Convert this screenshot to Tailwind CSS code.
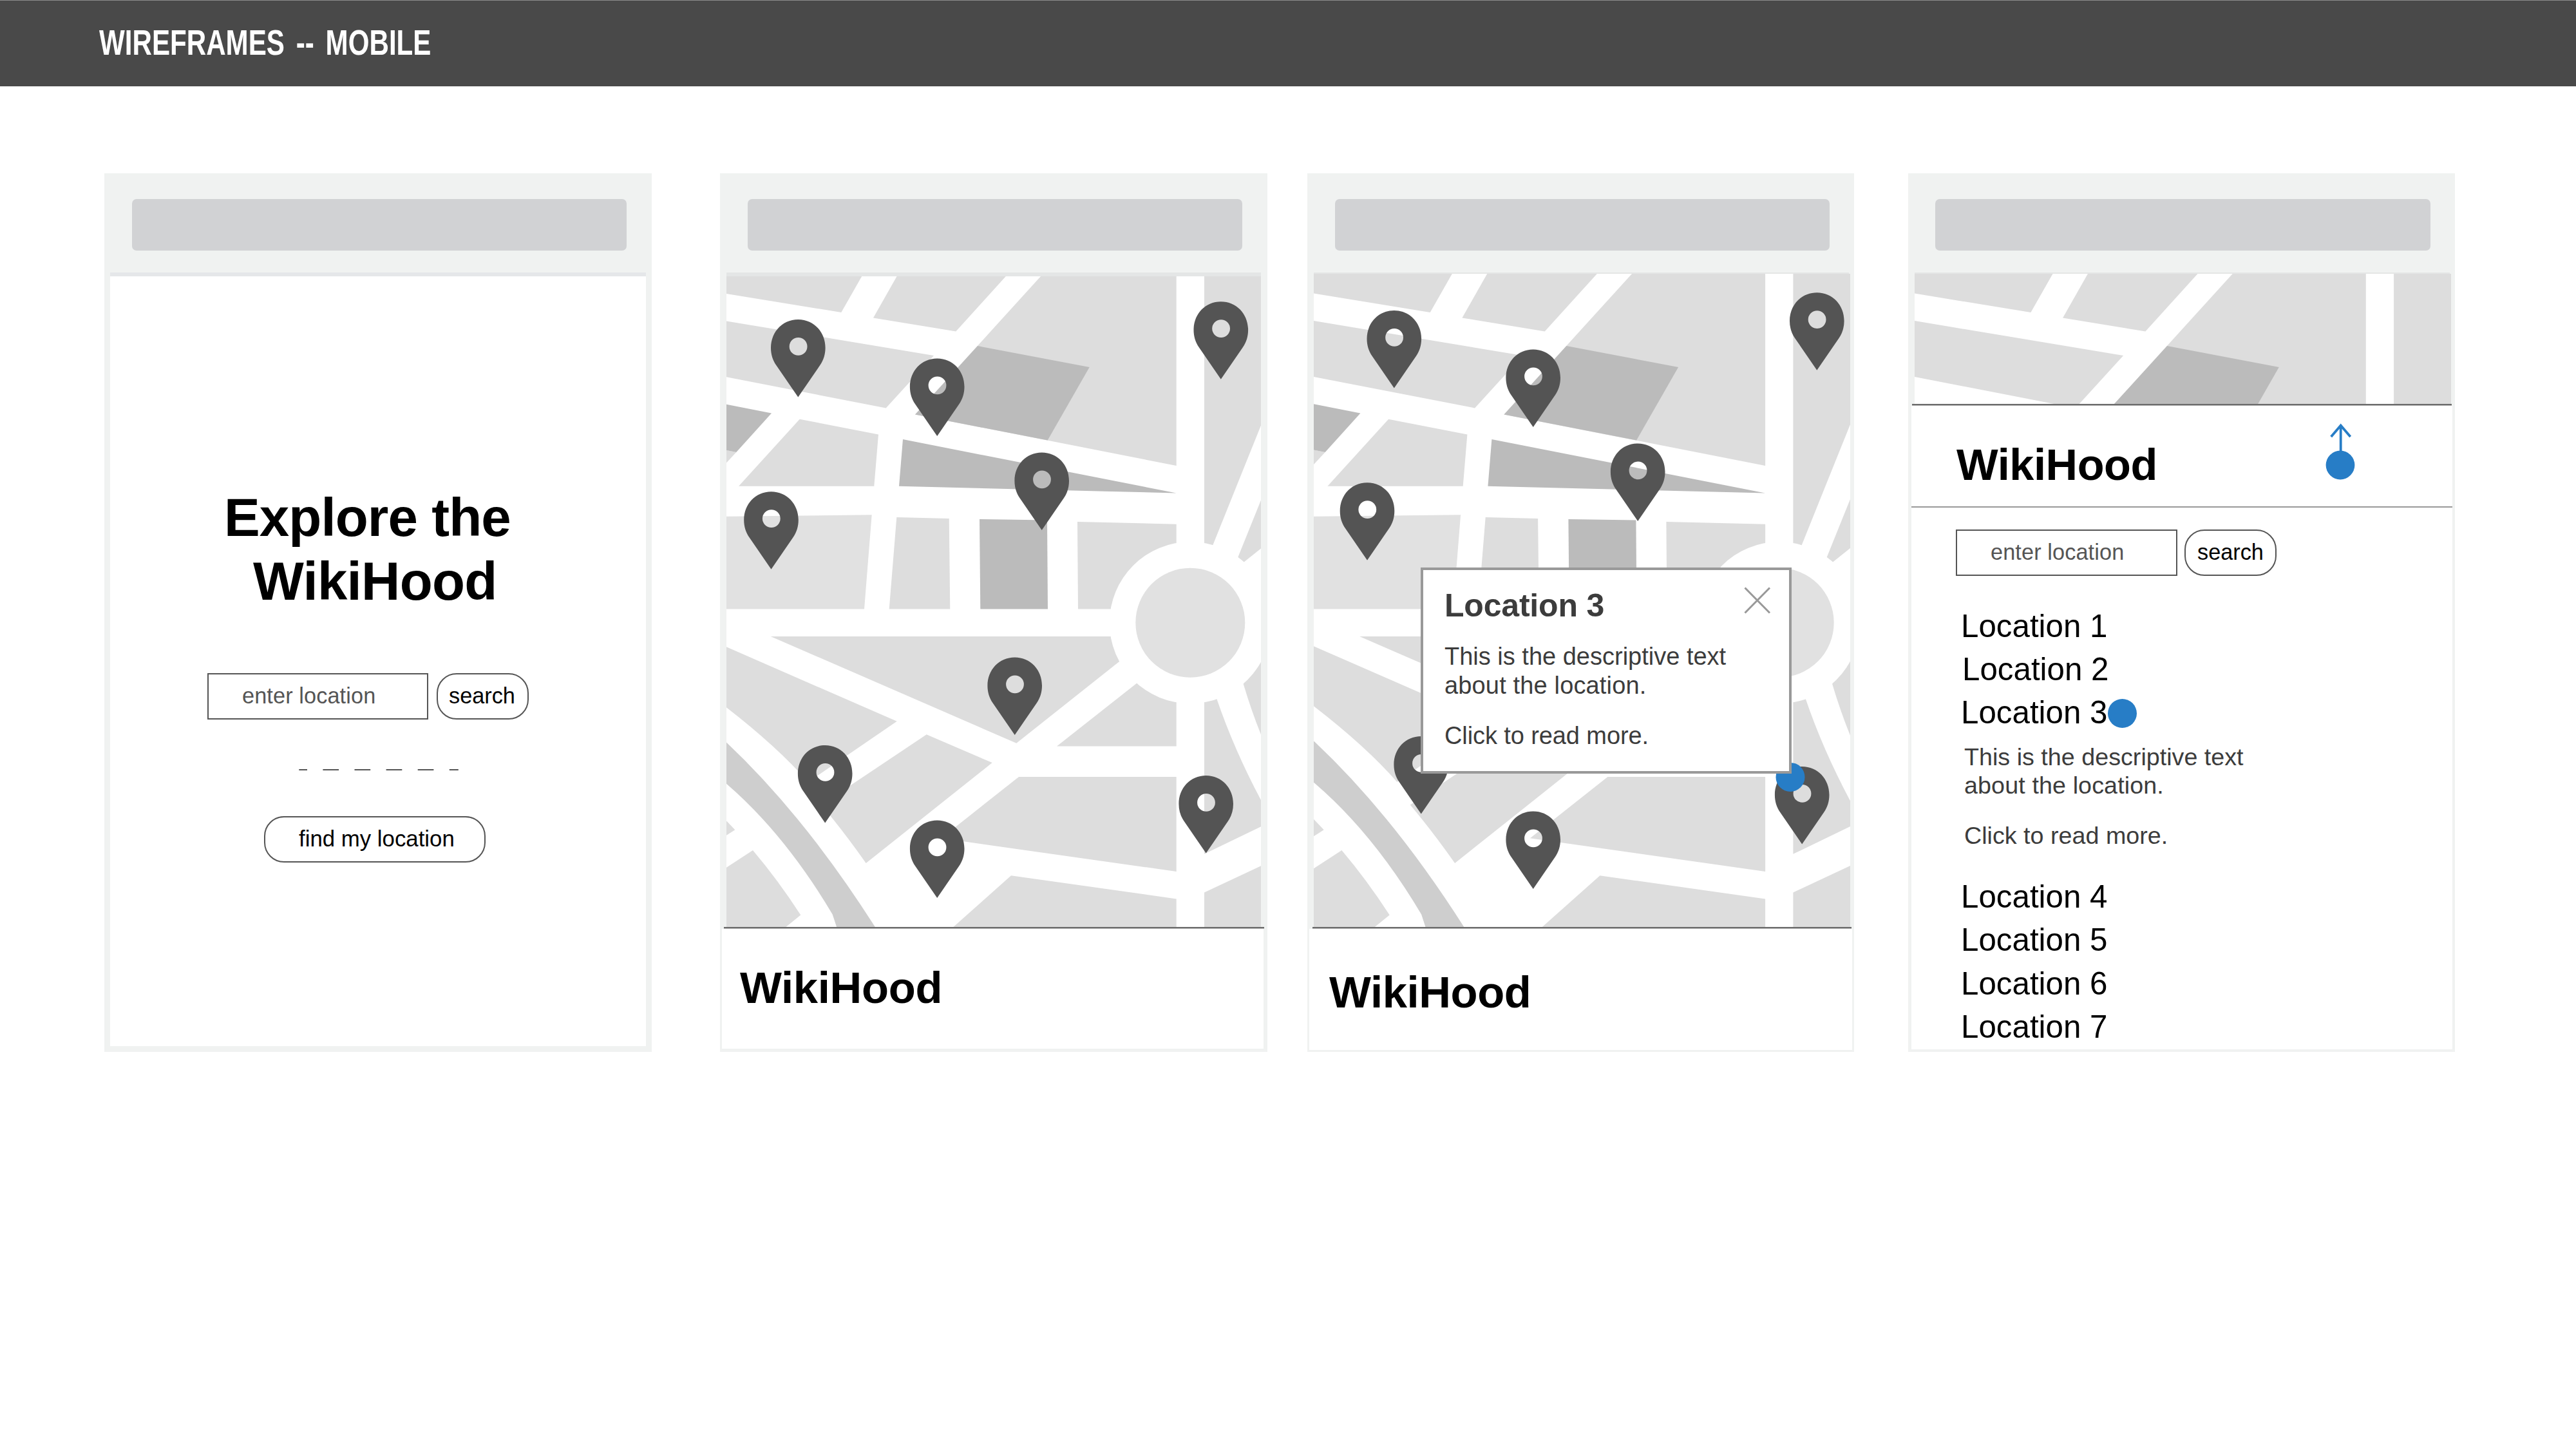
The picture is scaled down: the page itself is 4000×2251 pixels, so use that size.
<!DOCTYPE html>
<html lang="en">
<head>
<meta charset="utf-8">
<title>Wireframes -- Mobile</title>
<script src="https://cdn.jsdelivr.net/npm/@tailwindcss/browser@4"></script>
</head>
<body class="bg-white font-['Liberation_Sans',Arial,sans-serif] text-black w-[4000px] h-[2251px] overflow-hidden">

<!-- Shared map artwork -->
<svg class="hidden">
  <defs>
    <g id="streets">
      <g fill="#dddddd">
        <path d="M1120 420H1343.3L1306.3 485L1120 454.6Z"/>
        <path d="M1397.7 420H1570L1484.3 514.5L1356 493.4Z"/>
        <path d="M1120 497.1L1450 552L1375.7 633.5L1120 583.8Z"/>
        <path d="M1624.2 420H1826.7V723L1421 643.4Z"/>
        <path d="M1120 697.4L1143.3 702L1120 727Z"/>
        <path d="M1241.7 650.7L1364 674.4L1357.3 754.8H1147Z"/>
        <path d="M1392.3 803L1473.7 804.9L1475.3 945.6H1380.7Z"/>
        <path d="M1673 809.9L1826.7 813.7V945.6H1674Z"/>
        <path d="M1870 420H1965V643L1883.3 846.2L1870 860Z"/>
        <path d="M1965 759L1922.3 865.1L1931.7 872.4L1965 846Z"/>
        <path d="M1196.7 988H1750L1737.7 1027.2L1578.3 1153.8Z"/>
        <path d="M1765 1060.7L1826.7 1030V1158.5H1641Z"/>
        <path d="M1582 1206H1826.7V1353L1461.5 1301.3Z"/>
        <path d="M1570 1359.3L1826.7 1395.4V1445H1471L1480.7 1438.8Z"/>
        <path d="M1120 1000.8L1392.7 1119.8L1255 1214Q1205 1157 1120 1092Z"/>
        <path d="M1438.7 1140.2L1540.7 1184.1L1344.7 1340Q1311 1292 1275.4 1249.5Z"/>
        <path d="M1120 1266L1141.3 1288.2L1120 1302Z"/>
        <path d="M1120 1352L1169 1320Q1208 1366 1243.3 1420.5L1213 1445H1120Z"/>
        <path d="M1870 1060L1889.3 1084.7Q1918 1169 1965 1255V1280L1870 1325.8Z"/>
        <path d="M1930.7 1061.7L1950 1020H1965V1157Q1946 1113 1930.7 1061.7Z"/>
        <path d="M1870 1385.4L1965 1341V1445H1870Z"/>
      </g>
      <g fill="#bbbbbb">
        <path d="M1518 537L1691.7 570L1626.7 683.6L1421 643.4Z"/>
        <path d="M1120 626.2L1198 641.5L1143.3 702L1120 697.4Z"/>
        <path d="M1402 682L1826.7 765.5L1396 754.8Z"/>
        <path d="M1521 806L1626 807.6L1627 945.6H1522.3Z"/>
      </g>
      <path fill="#e1e1e1" d="M1120 801.9L1353.7 799.2L1342 945.6H1120Z"/>
      <path fill="#cecece" d="M1120 1146L1127.7 1152.2Q1249 1266.5 1358.7 1438.8L1362 1445H1301L1299 1438.8L1292.7 1419.4Q1218 1294 1127.7 1216.5L1120 1210Z"/>
      <circle cx="1848.3" cy="966.7" r="125.5" fill="#fff"/>
      <circle cx="1848.3" cy="966.7" r="85" fill="#e1e1e1"/>
    </g>
    <path id="pin" fill="#545454" fill-rule="evenodd" d="M0 0C24.5 0 42.3 19.5 42.3 44C42.3 54 39.6 63 34 71L0 120.5L-34 71C-39.6 63 -42.3 54 -42.3 44C-42.3 19.5 -24.5 0 0 0ZM.3 28A13.9 13.9 0 1 0 .3 55.8A13.9 13.9 0 1 0 .3 28Z"/>
    <g id="pins">
      <use href="#pin" x="1239.3" y="496"/>
      <use href="#pin" x="1455.2" y="556.4"/>
      <use href="#pin" x="1197.5" y="763.2"/>
      <use href="#pin" x="1617.7" y="702.5"/>
      <use href="#pin" x="1895.8" y="468.2"/>
      <use href="#pin" x="1281.2" y="1157"/>
      <use href="#pin" x="1575.7" y="1020.4"/>
      <use href="#pin" x="1455.2" y="1273.5"/>
      <use href="#pin" x="1872.7" y="1204"/>
    </g>
  </defs>
</svg>

<header class="h-[134px] bg-[#494949] border-t border-[#8c8c8c] pl-[154px]">
  <h1 class="inline-block origin-left scale-x-[0.766] whitespace-nowrap text-[55px] font-bold leading-[130px] text-white [word-spacing:8px]">WIREFRAMES -- MOBILE</h1>
</header>

<main class="flex items-start pl-[162px] pt-[135px]">

  <!-- Landing -->
  <section class="flex h-[1364px] w-[850px] shrink-0 flex-col bg-[#f0f2f1] pt-10">
    <div class="ml-[43px] mr-[39px] h-[80px] rounded-[7px] bg-[#d1d2d4]"></div>
    <div class="mx-[9px] mt-[34px] h-[6px] bg-[#e5e7e9]"></div>
    <div class="mx-[9px] h-[1195px] bg-white pt-[325px]">
      <h2 class="whitespace-nowrap text-[83.5px] font-bold leading-[98.5px]">
        <span class="block pl-[177px] tracking-[-0.9px]">Explore the</span>
        <span class="block pl-[222px] tracking-[-0.7px]">WikiHood</span>
      </h2>
      <div class="ml-[151px] mt-[94px] flex h-[72px] gap-[13px] text-[34.3px] leading-[67px]">
        <div class="w-[343px] border-2 border-[#555] pl-[52px] text-[#555] tracking-[0.1px]">enter location</div>
        <div class="w-[143px] whitespace-nowrap rounded-[31px] border-2 border-[#555] pl-[17px]">search</div>
      </div>
      <svg class="ml-[293px] mt-[77px] block" width="248" height="3" viewBox="0 0 248 3"><path d="M0.3 1H247.8" stroke="#555" stroke-width="2" stroke-dasharray="24.7 24.4" stroke-dashoffset="12"/></svg>
      <div class="ml-[239px] mt-[70px] h-[72px] w-[344px] whitespace-nowrap rounded-[31px] border-2 border-[#555] pl-[52px] text-[34.8px] leading-[66px]">find my location</div>
    </div>
  </section>

  <!-- Map -->
  <section class="ml-[106px] flex h-[1364px] w-[850px] shrink-0 flex-col bg-[#f0f2f1] pt-10">
    <div class="ml-[43px] mr-[39px] h-[80px] rounded-[7px] bg-[#d1d2d4]"></div>
    <div class="ml-[10px] mr-[10px] mt-[34px] h-[6px] bg-[#e4e6e6]"></div>
    <svg class="ml-[10px] block shrink-0 bg-white" width="830" height="1010" viewBox="1128 429 830 1010">
      <use href="#streets"/>
      <use href="#pins"/>
    </svg>
    <div class="ml-[6px] mr-[5px] h-[3px] border-b border-[#b0b0b0] bg-[#6c6c6c]"></div>
    <div class="ml-[3px] mr-[6px] h-[186px] bg-white pl-[28px] pt-[52px]">
      <h2 class="text-[68.8px] font-bold leading-[80px] tracking-[-0.3px]">WikiHood</h2>
    </div>
  </section>

  <!-- Map with open location -->
  <section class="ml-[62px] flex h-[1364px] w-[849px] shrink-0 flex-col bg-[#f0f2f1] pt-10">
    <div class="ml-[43px] mr-[38px] h-[80px] rounded-[7px] bg-[#d1d2d4]"></div>
    <div class="ml-[10px] mr-[8px] mt-[34px] h-[2px] bg-[#e4e6e5]"></div>
    <div class="relative ml-[10px] h-[1014px] w-[833px] shrink-0 bg-white">
      <svg class="block" width="833" height="1014" viewBox="1125.6 425 833 1014">
        <use href="#streets"/>
        <use href="#pins" x="11.1" y="-14"/>
        <circle cx="1865.6" cy="1206.4" r="22.5" fill="#277dc6"/>
      </svg>
      <div class="absolute left-[166px] top-[456px] h-[320px] w-[576px] border-4 border-[#999] bg-white pl-[33px] pt-[25px] text-[#3c3c3c]">
        <svg class="absolute left-[498px] top-[26px]" width="42" height="42" viewBox="0 0 42 42"><path d="M1.5 1.5L40 40.5M40 1.5L1.5 40.5" stroke="#999" stroke-width="3" fill="none"/></svg>
        <h3 class="text-[50px] font-bold leading-[60px] tracking-[-0.2px]">Location 3</h3>
        <p class="mt-[27px] whitespace-nowrap text-[38px] leading-[44.5px]">This is the descriptive text<br><span class="tracking-[0.15px]">about the location.</span></p>
        <p class="mt-[34px] text-[38px] leading-[44.5px] tracking-[-0.1px]">Click to read more.</p>
      </div>
    </div>
    <div class="ml-[8px] mr-[4px] h-[3px] border-b border-[#b0b0b0] bg-[#6c6c6c]"></div>
    <div class="ml-[3px] mr-[3px] h-[188px] bg-white pl-[31px] pt-[59px]">
      <h2 class="text-[68.8px] font-bold leading-[80px] tracking-[-0.4px]">WikiHood</h2>
    </div>
  </section>

  <!-- Location list -->
  <section class="ml-[84px] flex h-[1364px] w-[849px] shrink-0 flex-col bg-[#f0f2f1] pt-10">
    <div class="ml-[42px] mr-[38px] h-[80px] rounded-[7px] bg-[#d1d2d4]"></div>
    <div class="ml-[10px] mr-[8px] mt-[34px] h-[2px] bg-[#e4e6e5]"></div>
    <svg class="ml-[10px] block shrink-0 bg-white" width="833" height="202" viewBox="1125.9 425 833 202">
      <use href="#streets"/>
    </svg>
    <div class="ml-[6px] mr-[5px] h-[3px] border-b border-[#b0b0b0] bg-[#6c6c6c]"></div>
    <div class="ml-[5px] mr-[4px] h-[999px] bg-white">
      <div class="flex h-[158px] items-start border-b-2 border-[#999] pl-[70px] pt-[27px]">
        <h2 class="mt-[25px] w-[573px] text-[68.5px] font-bold leading-[80px] tracking-[-0.4px]">WikiHood</h2>
        <svg width="46" height="88" viewBox="0 0 46 88" fill="none"><path d="M23.7 3V46M8.7 21L23.7 3.5L38.7 21" stroke="#277dc6" stroke-width="3.8"/><circle cx="23" cy="65" r="22.4" fill="#277dc6"/></svg>
      </div>
      <div class="ml-[69px] mt-[34px] flex h-[72px] gap-[11px] text-[34.3px] leading-[67px]">
        <div class="w-[344px] border-2 border-[#555] pl-[52px] text-[#555] tracking-[0.1px]">enter location</div>
        <div class="w-[143px] whitespace-nowrap rounded-[31px] border-2 border-[#555] pl-[18px]">search</div>
      </div>
      <ul class="mt-[44px] pl-[77px] text-[49.3px] leading-[67px]">
        <li>Location 1</li>
        <li class="pl-[2px]">Location 2</li>
        <li class="flex items-center"><span class="w-[228px] whitespace-nowrap">Location 3</span><span class="mt-[4px] size-[45px] rounded-full bg-[#277dc6]"></span></li>
        <li class="mb-[39px] mt-[14px] pl-[5px] text-[37.7px] leading-[44px] text-[#3c3c3c]">
          <p>This is the descriptive text<br><span class="tracking-[0.1px]">about the location.</span></p>
          <p class="mt-[34px]">Click to read more.</p>
        </li>
        <li class="leading-[67.4px]">Location 4</li>
        <li class="leading-[67.4px]">Location 5</li>
        <li class="leading-[67.4px]">Location 6</li>
        <li class="leading-[67.4px]">Location 7</li>
      </ul>
    </div>
  </section>
</main>
</body>
</html>
